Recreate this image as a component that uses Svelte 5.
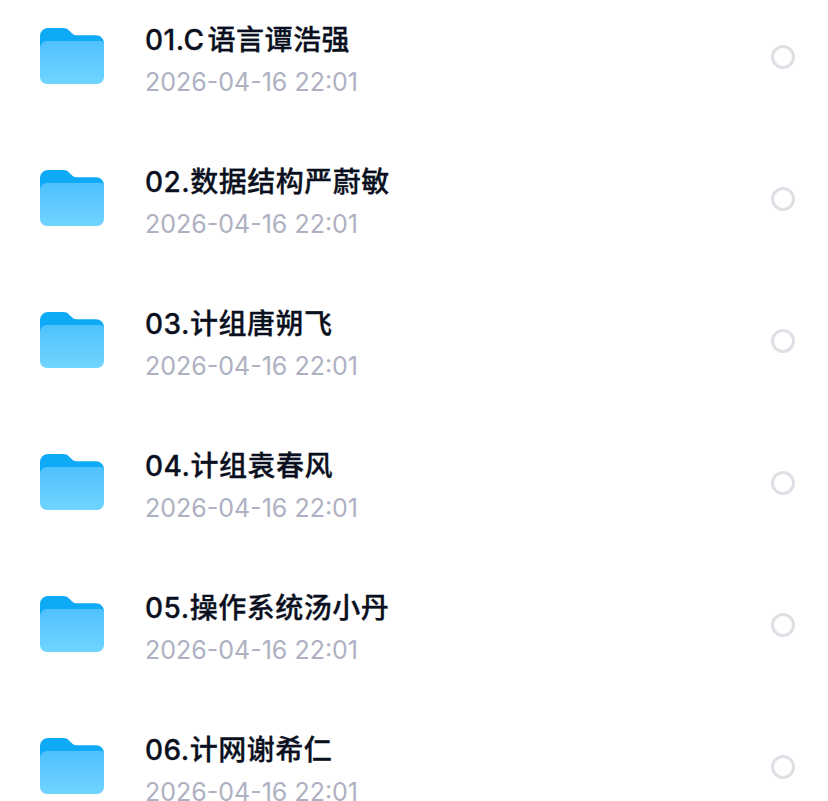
<script lang="ts">
const date = '2026-04-16 22:01';
const folders = [
  '01.C 语言谭浩强',
  '02.数据结构严蔚敏',
  '03.计组唐朔飞',
  '04.计组袁春风',
  '05.操作系统汤小丹',
  '06.计网谢希仁'
];
</script>

<main class="list">
  {#each folders as name, i}
    <div class="row">
      <svg class="folder" width="66" height="58" viewBox="0 0 66 58">
        <defs>
          <linearGradient id={'front' + i} x1="0" y1="0" x2="0" y2="1">
            <stop offset="0" stop-color="#4fc1fd" />
            <stop offset="1" stop-color="#70d4fe" />
          </linearGradient>
        </defs>
        <path d="M1 9a8 8 0 0 1 8-8h15c2.600 0 4.400.8 6 2.400l3.200 3.200c1.200 1.200 2.400 1.600 4 1.600H57a8 8 0 0 1 8 8v14H1z" fill="#0eaaf6" />
        <path d="M1 21a7 7 0 0 1 7-7h50a7 7 0 0 1 7 2v34a7 7 0 0 1-7 7H8a7 7 0 0 1-7-7z" fill={'url(#front' + i + ')'} />
      </svg>
      <div class="info">
        <div class="name">{name}</div>
        <div class="date">{date}</div>
      </div>
      <span class="radio"></span>
    </div>
  {/each}
</main>

<style>
:global(body) {
  margin: 0;
  background: #fff;
  overflow: hidden;
}
.list {
  height: 801px;
  overflow: hidden;
  font-family: "Inter", "Noto Sans CJK SC", sans-serif;
}
.row {
  display: flex;
  align-items: center;
  height: 142px;
  padding: 0 33px 0 39px;
  box-sizing: border-box;
}
.row:first-child {
  margin-top: -15px;
}
.folder {
  flex: none;
}
.info {
  flex: 1;
  margin-left: 40px;
  padding-top: 9px;
  display: flex;
  flex-direction: column;
  gap: 12px;
}
.name {
  font-size: 28px;
  line-height: 30px;
  font-weight: 500;
  letter-spacing: 0.5px;
  word-spacing: -5px;
  color: #0a1020;
  -webkit-text-stroke: 0.3px #0a1020;
}
.date {
  font-size: 25px;
  line-height: 30px;
  color: #aeb1c2;
}
.radio {
  flex: none;
  width: 24px;
  height: 24px;
  margin-top: 1px;
  box-sizing: border-box;
  border: 3px solid #dfdfe5;
  border-radius: 50%;
}
</style>
